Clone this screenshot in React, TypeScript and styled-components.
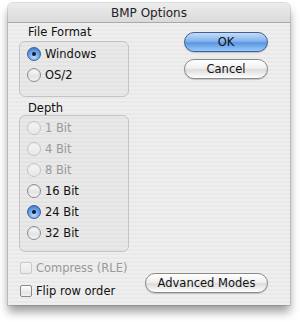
import React from "react";
import styled, { createGlobalStyle } from "styled-components";

const GlobalStyle = createGlobalStyle`
  html, body {
    margin: 0;
    padding: 0;
    background: #ffffff;
  }
  body {
    font-family: "DejaVu Sans", "Liberation Sans", sans-serif;
    font-size: 11.5px;
    color: #111;
  }
`;

const Page = styled.div`
  width: 300px;
  height: 322px;
  padding: 3px 10px 0 8px;
  box-sizing: border-box;
`;

const Window = styled.div`
  width: 282px;
  height: 302px;
  border-radius: 5px 5px 0 0;
  overflow: hidden;
  display: flex;
  flex-direction: column;
  box-shadow: 0 0 0 1px rgba(0, 0, 0, 0.12), 0 7px 10px rgba(0, 0, 0, 0.38);
  background-color: #ededed;
  background-image: repeating-linear-gradient(
    180deg,
    #efefef 0px,
    #efefef 2px,
    #e9e9e9 2px,
    #e9e9e9 4px
  );
`;

const TitleBar = styled.div`
  height: 19px;
  flex: none;
  display: flex;
  align-items: center;
  justify-content: center;
  font-size: 12px;
  color: #222;
  background: linear-gradient(180deg, #ececec 0%, #dadada 100%);
  border-bottom: 1px solid #a9a9a9;
`;

const Body = styled.div`
  flex: 1;
  display: grid;
  grid-template-columns: 110px 84px;
  column-gap: 55px;
  padding: 2px 0 0 11px;
`;

const Column = styled.div`
  display: flex;
  flex-direction: column;
`;

const GroupLabel = styled.div<{ $top?: number; $bottom?: number }>`
  padding-left: 9px;
  height: 14px;
  line-height: 14px;
  margin-top: ${({ $top }) => $top ?? 0}px;
  margin-bottom: ${({ $bottom }) => $bottom ?? 2}px;
  white-space: nowrap;
`;

const GroupBox = styled.div<{ $bottom: number }>`
  border: 1px solid #c3c3c3;
  border-radius: 6px;
  background: rgba(0, 0, 0, 0.025);
  padding: 5px 0 ${({ $bottom }) => $bottom}px 7px;
  display: flex;
  flex-direction: column;
  gap: 7px;
`;

const Row = styled.label<{ $disabled?: boolean }>`
  display: flex;
  align-items: center;
  height: 14px;
  gap: 4px;
  white-space: nowrap;
  color: ${({ $disabled }) => ($disabled ? "#9a9a9a" : "#111")};
`;

const RadioDot = styled.span<{ $checked?: boolean; $disabled?: boolean }>`
  width: 14px;
  height: 14px;
  box-sizing: border-box;
  border-radius: 50%;
  flex: none;
  display: flex;
  align-items: center;
  justify-content: center;
  border: 1px solid
    ${({ $checked, $disabled }) =>
      $checked ? "#3c5f9a" : $disabled ? "#c4c4c4" : "#8c8c8c"};
  background: ${({ $checked, $disabled }) =>
    $checked
      ? "radial-gradient(circle at 50% 75%, #b9dcff 0%, #6ea8ec 45%, #3c78cf 100%)"
      : $disabled
      ? "linear-gradient(180deg, #f4f4f4 0%, #e8e8e8 100%)"
      : "linear-gradient(180deg, #ffffff 0%, #e2e2e2 60%, #f6f6f6 100%)"};
  box-shadow: inset 0 1px 1px rgba(0, 0, 0, ${({ $disabled }) => ($disabled ? 0.04 : 0.12)});

  &::after {
    content: "";
    display: ${({ $checked }) => ($checked ? "block" : "none")};
    width: 4px;
    height: 4px;
    border-radius: 50%;
    background: #1a1a2a;
  }
`;

const CheckSquare = styled.span<{ $disabled?: boolean }>`
  width: 12px;
  height: 12px;
  box-sizing: border-box;
  flex: none;
  border-radius: 2px;
  border: 1px solid ${({ $disabled }) => ($disabled ? "#c8c8c8" : "#8a8a8a")};
  background: ${({ $disabled }) =>
    $disabled
      ? "linear-gradient(180deg, #f4f4f4, #e9e9e9)"
      : "linear-gradient(180deg, #ffffff 0%, #e4e4e4 70%, #f4f4f4 100%)"};
`;

const CheckList = styled.div`
  display: flex;
  flex-direction: column;
  gap: 9px;
  margin-top: 9px;
  padding-left: 1px;
`;

const Actions = styled.div`
  display: flex;
  flex-direction: column;
  align-items: flex-end;
  gap: 7px;
  padding-top: 7px;
  padding-bottom: 12px;
`;

const PillButton = styled.button<{ $primary?: boolean; $wide?: boolean }>`
  font-family: "DejaVu Sans", "Liberation Sans", sans-serif;
  font-size: 11.5px;
  color: #111;
  height: 20px;
  padding: 0;
  flex: none;
  border-radius: 10px;
  cursor: default;
  white-space: nowrap;
  width: ${({ $wide }) => ($wide ? "123px" : "84px")};
  margin-top: ${({ $wide }) => ($wide ? "auto" : "0")};
  border: 1px solid ${({ $primary }) => ($primary ? "#3f5f92" : "#8a8a8a")};
  background: ${({ $primary }) =>
    $primary
      ? "linear-gradient(180deg, #c4dcf8 0%, #84b4ec 45%, #5a96e2 55%, #98cbfa 100%)"
      : "linear-gradient(180deg, #ffffff 0%, #f0f0f0 45%, #dcdcdc 55%, #ffffff 100%)"};
  box-shadow: 0 1px 1px rgba(0, 0, 0, 0.18);
`;

type Opt = { label: string; checked?: boolean; disabled?: boolean };

const formats: Opt[] = [{ label: "Windows", checked: true }, { label: "OS/2" }];

const depths: Opt[] = [
  { label: "1 Bit", disabled: true },
  { label: "4 Bit", disabled: true },
  { label: "8 Bit", disabled: true },
  { label: "16 Bit" },
  { label: "24 Bit", checked: true },
  { label: "32 Bit" },
];

const App: React.FC = () => {
  return (
    <>
      <GlobalStyle />
      <Page>
        <Window>
          <TitleBar>BMP Options</TitleBar>
          <Body>
            <Column>
              <GroupLabel>File Format</GroupLabel>
              <GroupBox $bottom={14}>
                {formats.map((o) => (
                  <Row key={o.label}>
                    <RadioDot $checked={o.checked} />
                    {o.label}
                  </Row>
                ))}
              </GroupBox>
              <GroupLabel $top={4} $bottom={0}>
                Depth
              </GroupLabel>
              <GroupBox $bottom={11}>
                {depths.map((o) => (
                  <Row key={o.label} $disabled={o.disabled}>
                    <RadioDot $checked={o.checked} $disabled={o.disabled} />
                    {o.label}
                  </Row>
                ))}
              </GroupBox>
              <CheckList>
                <Row $disabled>
                  <CheckSquare $disabled />
                  Compress (RLE)
                </Row>
                <Row>
                  <CheckSquare />
                  Flip row order
                </Row>
              </CheckList>
            </Column>
            <Actions>
              <PillButton $primary>OK</PillButton>
              <PillButton>Cancel</PillButton>
              <PillButton $wide>Advanced Modes</PillButton>
            </Actions>
          </Body>
        </Window>
      </Page>
    </>
  );
};

export default App;
